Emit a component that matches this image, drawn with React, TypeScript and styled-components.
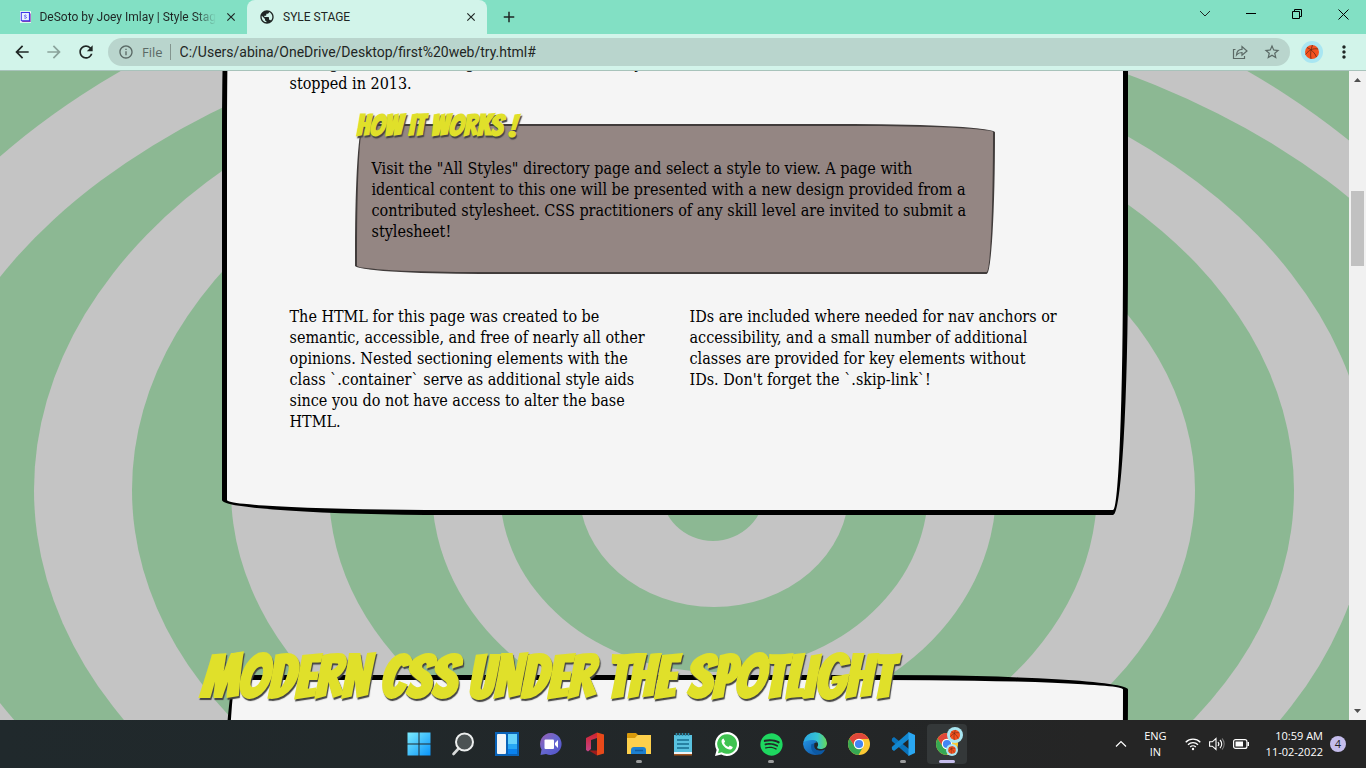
import React from "react";
import styled, { createGlobalStyle } from "styled-components";
import {
  MdAdd,
  MdArrowBack,
  MdArrowForward,
  MdClose,
  MdInfoOutline,
  MdMoreVert,
  MdPublic,
  MdRefresh,
  MdStarBorder,
} from "react-icons/md";
import { FaSpotify } from "react-icons/fa";

const Global = createGlobalStyle`
  * { box-sizing: border-box; }
  body { margin: 0; font-family: "Open Sans", "Noto Sans", sans-serif; }
  button { border: 0; padding: 0; background: none; color: inherit; font: inherit; }
  svg { display: block; }
`;

const Screen = styled.div`
  display: flex;
  flex-direction: column;
  height: 100vh;
  overflow: hidden;
`;

/* ---------- browser frame ---------- */

const TabStrip = styled.header`
  display: flex;
  height: 34px;
  padding-left: 8px;
  background: #82e0c4;
  color: #1f2624;
`;

const Tab = styled.div<{ $active?: boolean }>`
  position: relative;
  display: flex;
  align-items: center;
  gap: 8px;
  width: ${(p) => (p.$active ? 240 : 239)}px;
  padding: 0 9px 0 12px;
  border-radius: 8px 8px 0 0;
  background: ${(p) => (p.$active ? "#d2f4ea" : "transparent")};
  font: 12px Roboto, "Open Sans", sans-serif;
`;

const TabTitle = styled.span<{ $fade?: boolean }>`
  flex: 1;
  white-space: nowrap;
  mask-image: ${(p) => (p.$fade ? "linear-gradient(90deg, #000 88%, transparent)" : "none")};
`;

const TabButton = styled.button`
  display: grid;
  place-items: center;
  width: 14px;
  height: 20px;
`;

const NewTab = styled.button`
  display: grid;
  place-items: center;
  width: 28px;
  margin-left: 8px;
`;

const WindowButtons = styled.div`
  display: flex;
  margin-left: auto;
`;

const WindowButton = styled.button`
  display: grid;
  place-items: center;
  width: 46px;
  height: 28px;
`;

const Toolbar = styled.nav`
  display: flex;
  align-items: center;
  height: 37px;
  padding: 0 6px;
  border-bottom: 1px solid #a8c3bb;
  background: #d2f4ea;
  color: #1f2624;
`;

const ToolButton = styled.button<{ $muted?: boolean }>`
  display: grid;
  place-items: center;
  width: 32px;
  height: 28px;
  color: ${(p) => (p.$muted ? "#8aa39b" : "inherit")};
`;

const AddressBar = styled.label`
  display: flex;
  flex: 1;
  align-items: center;
  height: 28px;
  margin: 0 6px;
  padding: 0 2px 0 10px;
  border-radius: 14px;
  background: #b9d5cd;
  color: #5a6965;
  font-size: 13px;
`;

const Scheme = styled.span`
  margin-left: 8px;
  padding-right: 7px;
  border-right: 1px solid #83958f;
  line-height: 16px;
`;

const AddressInput = styled.input`
  flex: 1;
  min-width: 0;
  padding: 0 9px;
  border: 0;
  outline: 0;
  background: none;
  color: #1f2624;
  font: 14px Roboto, "Open Sans", sans-serif;
`;

/* ---------- page ---------- */

const Pane = styled.div`
  display: grid;
  grid-template-columns: 1fr 17px;
  flex: 1;
  min-height: 0;
`;

const Page = styled.main`
  position: relative;
  overflow: hidden;
  background: #8cb893;
`;

const Rings = styled.svg`
  position: absolute;
  inset: 0;
  width: 100%;
  height: 100%;
`;

const Content = styled.div`
  position: relative;
  max-width: 906px;
  margin: -166px auto 0;
  color: #000;
  font: 300 16px/21px "Roboto Slab", "DejaVu Serif Condensed", "DejaVu Serif", serif;
`;

const Card = styled.section`
  min-height: 260px;
  padding: 142px 61px 78px 63px;
  border: 5px solid #000;
  border-radius: 15px 255px 15px 225px / 225px 15px 255px 15px;
  background: #f5f5f5;
`;

const Paragraph = styled.p`
  margin: 0;
`;

const Note = styled.aside`
  max-width: 640px;
  margin: 30px auto 32px 65px;
  padding: 0 16px 30px 15px;
  border: 2px solid #413c3b;
  border-radius: 15px 255px 15px 225px / 225px 15px 255px 15px;
  background: #948683;
`;

const headingFace = `
  color: #e0e02a;
  font-family: Bangers, "Roboto Condensed", "Liberation Sans Narrow", sans-serif;
  font-weight: 700;
  text-transform: uppercase;
  white-space: nowrap;
  text-shadow: 1px 2px 1px #444;
`;

const NoteTitle = styled.h3`
  ${headingFace}
  margin: -16px 0 16px -15px;
  font-size: 30px;
  line-height: 32px;
`;

const Columns = styled.div`
  display: grid;
  grid-template-columns: 1fr 1fr;
  gap: 28px;
`;

const SectionTitle = styled.h2`
  ${headingFace}
  position: relative;
  margin: 132px 0 -32px -20px;
  font-size: 60px;
  line-height: 60px;
`;

const ScrollTrack = styled.div`
  display: flex;
  flex-direction: column;
  align-items: center;
  padding: 7px 0;
  background: #f1f1f1;
`;

const ScrollThumb = styled.div`
  width: 13px;
  height: 75px;
  margin: 109px 0 auto;
  background: #c1c1c1;
`;

/* ---------- taskbar ---------- */

const Taskbar = styled.footer`
  display: grid;
  grid-template-columns: 1fr auto 1fr;
  height: 48px;
  background: linear-gradient(90deg, #20292c, #222729 50%, #252525 80%);
  color: #fff;
`;

const Apps = styled.div`
  display: flex;
  grid-column: 2;
  align-items: center;
  gap: 4px;
`;

const AppButton = styled.button<{ $active?: boolean }>`
  position: relative;
  display: grid;
  place-items: center;
  width: 40px;
  height: 40px;
  border-radius: 4px;
  background: ${(p) => (p.$active ? "#343839" : "none")};
`;

const Running = styled.span<{ $active?: boolean }>`
  position: absolute;
  bottom: 1px;
  left: 50%;
  width: ${(p) => (p.$active ? 16 : 6)}px;
  height: 3px;
  border-radius: 2px;
  background: ${(p) => (p.$active ? "#c5bdec" : "#9a9c9d")};
  transform: translateX(-50%);
`;

const Tray = styled.div`
  display: flex;
  align-items: center;
  justify-content: flex-end;
  padding-right: 20px;
  font-size: 11px;
  line-height: 16px;
`;

const TrayButton = styled.button`
  display: flex;
  align-items: center;
  gap: 8px;
`;

const Language = styled(TrayButton)`
  display: block;
  margin: 0 18px 0 17px;
  text-align: center;
`;

const Clock = styled.time`
  margin-left: 16px;
  text-align: right;
`;

const Count = styled.span`
  display: grid;
  place-items: center;
  width: 16px;
  height: 16px;
  margin-left: 7px;
  border-radius: 50%;
  background: #c5bdec;
  color: #222;
`;

/* rings from the outermost inwards: centre x, radii */
const rings: [number, number, number][] = [
  [684, 853, 558],
  [714, 794, 487],
  [702, 668, 459],
  [713, 581, 408],
  [713, 482, 344],
  [713, 384, 296],
  [714, 282, 237],
  [714, 214, 182],
  [714, 135, 117],
  [713, 52, 51],
];

const Backdrop = () => (
  <Rings viewBox="0 71 1349 649" preserveAspectRatio="xMidYMid slice" aria-hidden="true">
    {rings.map(([cx, rx, ry], i) => (
      <ellipse key={rx} cx={cx} cy={490} rx={rx} ry={ry} fill={i % 2 ? "#8cb893" : "#c4c4c4"} />
    ))}
  </Rings>
);

const Ball = ({ size }: { size: number }) => (
  <svg width={size} height={size} viewBox="0 0 22 22">
    <circle cx="11" cy="11" r="11" fill="#a9e6f2" />
    <circle cx="11" cy="11" r="7" fill="#f4511e" />
    <path
      d="M6 6.500C10 8 14 12 15.500 16M4.500 13.500C8 9 12 7 17 8M11.500 4C10 8 9 13 10 18"
      fill="none"
      stroke="#6b2a16"
      strokeWidth=".8"
    />
  </svg>
);

const StyleStageIcon = () => (
  <svg width="16" height="16" viewBox="0 0 16 16">
    <path fill="#fff" d="M0 0h16v16H0z" />
    <path fill="#8b3fb5" d="M3 3h12v12H3z" />
    <path fill="#e9f2ff" stroke="#3b35e8" strokeWidth="1.500" d="M1.750 1.750h11.500v11.500H1.750z" />
    <path
      d="M9 5.800C8.300 5 6.200 5.100 6.200 6.400c0 1.500 2.900.8 2.900 2.300 0 1.300-2.300 1.400-3.200.5"
      fill="none"
      stroke="#3b35e8"
      strokeWidth="1.100"
    />
  </svg>
);

const Share = () => (
  <svg width="18" height="18" viewBox="0 0 18 18" fill="none" stroke="#5a6965" strokeWidth="1.200">
    <path d="M4.500 6.500H2.500V15.500h11V13" />
    <path d="M5.500 12c.3-4 2.500-5.600 5.500-5.600V3.500L16 8l-5 4.300V9.500c-2.500 0-4.200.8-5.500 2.500z" />
  </svg>
);

const Chrome = () => (
  <svg width="24" height="24" viewBox="0 0 24 24">
    <circle cx="12" cy="12" r="11" fill="#fbc934" />
    <path fill="#e0473a" d="M2.500 6.500A11 11 0 0 1 21.500 6.500L22 7H12A5 5 0 0 0 7.500 14.300z" />
    <path fill="#36a853" d="M2.500 6.500A11 11 0 0 0 11.500 23L16.300 14.500A5 5 0 0 1 7.700 14.500z" />
    <circle cx="12" cy="12" r="5.200" fill="#fff" />
    <circle cx="12" cy="12" r="4.100" fill="#4285f4" />
  </svg>
);

const Start = () => (
  <svg width="24" height="24" viewBox="0 0 24 24">
    <linearGradient id="start" x2="1" y2="1">
      <stop stopColor="#7cecff" />
      <stop offset="1" stopColor="#0a94f8" />
    </linearGradient>
    <path fill="url(#start)" d="M.5.5h11v11H.5zM12.500.5h11v11h-11zM.5 12.500h11v11H.5zM12.500 12.500h11v11h-11z" />
  </svg>
);

const Search = () => (
  <svg width="24" height="24" viewBox="0 0 24 24">
    <path d="M8.500 15.500L2.500 22" stroke="#d8dada" strokeWidth="2.600" strokeLinecap="round" />
    <circle cx="13.500" cy="10" r="8.500" fill="#4b5253" stroke="#eceeee" strokeWidth="2" />
  </svg>
);

const Widgets = () => (
  <svg width="24" height="24" viewBox="0 0 24 24">
    <path fill="#0a63b8" d="M0 0h24v24H0z" />
    <rect x="2" y="2" width="9" height="20" rx="1" fill="#f3f5f7" />
    <path fill="#66d2fb" d="M13 2h9v10h-9z" />
    <path fill="#27a7f5" d="M13 12h9v5h-9z" />
    <path fill="#0a82ee" d="M13 17h9v5h-9z" />
  </svg>
);

const Chat = () => (
  <svg width="24" height="24" viewBox="0 0 24 24">
    <linearGradient id="chat" x2="1" y2="1">
      <stop stopColor="#9a5fb0" />
      <stop offset=".5" stopColor="#6567d0" />
      <stop offset="1" stopColor="#5050c8" />
    </linearGradient>
    <path fill="url(#chat)" d="M12 1a11 11 0 1 1-5 21l-5.500 1 1-5.500A11 11 0 0 1 12 1z" />
    <rect x="5.500" y="7.500" width="9.500" height="9.500" rx="1" fill="#fff" />
    <path fill="#fff" d="M16 11l3-3v8l-3-3z" />
  </svg>
);

const Office = () => (
  <svg width="24" height="24" viewBox="0 0 24 24">
    <linearGradient id="office" x2="0" y2="1">
      <stop stopColor="#d1232a" />
      <stop offset="1" stopColor="#c4448a" />
    </linearGradient>
    <path fill="url(#office)" d="M3 6l11-5.500V6L8 8v9l-3 2.500-2-1.500z" />
    <path fill="#9d1c1c" d="M6 18.500h8V23.500z" />
    <path fill="#e8491a" d="M14 .5l7 2v19l-7 2z" />
  </svg>
);

const Folder = () => (
  <svg width="24" height="24" viewBox="0 0 24 24">
    <path fill="#d99a0b" d="M0 2a1 1 0 0 1 1-1h8l2 2-2 3H0z" />
    <path fill="#fdd04c" d="M0 6h8l2.500-3H24v19H0z" />
    <path fill="#1d80d0" d="M4 22v-4a3 3 0 0 1 3-3h9a3 3 0 0 1 3 3v4z" />
    <path d="M8 18.500h8" stroke="#115c9f" strokeWidth="1.500" />
  </svg>
);

const Notepad = () => (
  <svg width="24" height="24" viewBox="0 0 24 24">
    <path fill="#59c2e0" d="M3 3h18v19H3z" />
    <path fill="#eef3f5" d="M3 20h18v2H3z" />
    <path fill="#a4561f" d="M3 22h18v1.500H3z" />
    <path d="M6 8h12M6 12h12M6 16h12" stroke="#176d8f" strokeWidth="1.500" />
    <path d="M5.500 1v3M8.500 1v3M11.500 1v3M14.500 1v3M17.500 1v3" stroke="#2f8fae" strokeWidth="1.600" />
  </svg>
);

const WhatsApp = () => (
  <svg width="24" height="24" viewBox="0 0 24 24">
    <path fill="#fff" d="M12 0a12 12 0 1 1-5.700 22.500L0 24l1.600-6.100A12 12 0 0 1 12 0z" />
    <path fill="#3fc351" d="M12 2.200a9.800 9.800 0 1 1-5.200 18L3 21.200l1-3.600A9.800 9.800 0 0 1 12 2.200z" />
    <path
      fill="#fff"
      d="M8.500 6.500c-.5 0-2 .8-2 2.700 0 3.800 5 8.300 8.300 8.300 1.800 0 3-1.200 2.900-2.600l-2.900-1.500-1.400 1.500c-1.900-.7-3.600-2.300-4.300-4l1-1.300z"
    />
  </svg>
);

const Edge = () => (
  <svg width="24" height="24" viewBox="0 0 24 24">
    <linearGradient id="edge-top" x2="1">
      <stop stopColor="#2aa5e4" />
      <stop offset=".6" stopColor="#35c3d2" />
      <stop offset="1" stopColor="#68d957" />
    </linearGradient>
    <linearGradient id="edge-low" x2="1" y2="1">
      <stop stopColor="#2596e6" />
      <stop offset="1" stopColor="#0b4b99" />
    </linearGradient>
    <path fill="url(#edge-low)" d="M0 12C1 5 12 5 14 10.500 9 10 9 17 15 18.500c2.500.6 5 .3 7-1A12 12 0 0 1 0 12z" />
    <path fill="#0c59a4" d="M8.500 12c-2 6 3 11.500 9 10.500 2-1 3.500-2.500 4.500-5-7 3-12 0-10.500-6z" />
    <path fill="url(#edge-top)" d="M.2 10.500A12 12 0 0 1 24 11c0 4.500-3.500 6-6.500 6s-4-1.200-3-2.500c1.500-2 .5-6-4.500-6.500-4-.3-8 1-9.800 2.500z" />
  </svg>
);

const Code = () => (
  <svg width="24" height="24" viewBox="0 0 24 24">
    <path fill="#0a72ba" d="M1 6.500l2-1.500L18 17v7L.8 9z" />
    <path fill="#1287d0" d="M1 17.500l2 1.500L18 7V0L.8 15z" />
    <path fill="#2aa7f2" d="M17.500 0L24 3v18l-6.500 3z" />
  </svg>
);

const ChromeProfile = styled.span`
  position: relative;
`;

const Badge = styled.span<{ $low?: boolean }>`
  position: absolute;
  top: ${(p) => (p.$low ? 12 : -5)}px;
  left: ${(p) => (p.$low ? 11 : 12)}px;
`;

const Caret = ({ down }: { down?: boolean }) => (
  <svg width="7" height="4" viewBox="0 0 7 4">
    <path fill="#505050" d={down ? "M0 0h7L3.500 4z" : "M0 4h7L3.500 0z"} />
  </svg>
);

const apps: { name: string; icon: React.ReactNode; running?: boolean }[] = [
  { name: "Start", icon: <Start /> },
  { name: "Search", icon: <Search /> },
  { name: "Widgets", icon: <Widgets /> },
  { name: "Chat", icon: <Chat /> },
  { name: "Office", icon: <Office /> },
  { name: "File Explorer", icon: <Folder />, running: true },
  { name: "Notepad", icon: <Notepad /> },
  { name: "WhatsApp", icon: <WhatsApp /> },
  { name: "Spotify", icon: <FaSpotify size={23} color="#1ed760" />, running: true },
  { name: "Edge", icon: <Edge /> },
  { name: "Chrome", icon: <Chrome /> },
  { name: "Visual Studio Code", icon: <Code />, running: true },
];

export default function App() {
  return (
    <Screen>
      <Global />
      <TabStrip>
        <Tab>
          <StyleStageIcon />
          <TabTitle $fade>DeSoto by Joey Imlay | Style Stag</TabTitle>
          <TabButton aria-label="Close tab"><MdClose size={14} /></TabButton>
        </Tab>
        <Tab $active>
          <MdPublic size={16} />
          <TabTitle>SYLE STAGE</TabTitle>
          <TabButton aria-label="Close tab"><MdClose size={14} /></TabButton>
        </Tab>
        <NewTab aria-label="New tab"><MdAdd size={18} /></NewTab>
        <WindowButtons>
          <WindowButton aria-label="Search tabs">
            <svg width="12" height="8" fill="none" stroke="#1f2624"><path d="M1 1l5 5 5-5" /></svg>
          </WindowButton>
          <WindowButton aria-label="Minimise">
            <svg width="10" height="2"><path d="M0 0h10v1H0z" /></svg>
          </WindowButton>
          <WindowButton aria-label="Restore">
            <svg width="11" height="11" fill="none" stroke="#000"><path d="M.5 2.500h7v7h-7zM2.500 2.500v-2h7v7h-2" /></svg>
          </WindowButton>
          <WindowButton aria-label="Close">
            <svg width="11" height="11" stroke="#000"><path d="M.5.5l10 10M10.500.5l-10 10" /></svg>
          </WindowButton>
        </WindowButtons>
      </TabStrip>
      <Toolbar>
        <ToolButton aria-label="Back"><MdArrowBack size={20} /></ToolButton>
        <ToolButton $muted aria-label="Forward"><MdArrowForward size={20} /></ToolButton>
        <ToolButton aria-label="Reload"><MdRefresh size={20} /></ToolButton>
        <AddressBar>
          <MdInfoOutline size={16} />
          <Scheme>File</Scheme>
          <AddressInput
            aria-label="Address"
            defaultValue="C:/Users/abina/OneDrive/Desktop/first%20web/try.html#"
          />
          <ToolButton as="span"><Share /></ToolButton>
          <ToolButton as="span"><MdStarBorder size={18} color="#5a6965" /></ToolButton>
        </AddressBar>
        <ToolButton aria-label="Profile"><Ball size={22} /></ToolButton>
        <ToolButton aria-label="Menu"><MdMoreVert size={20} /></ToolButton>
      </Toolbar>

      <Pane>
        <Page>
          <Backdrop />
          <Content>
            <Card>
              <Paragraph>
                through CSS-based design until new community entries
                <br />
                stopped in 2013.
              </Paragraph>
              <Note>
                <NoteTitle>How it works !</NoteTitle>
                <Paragraph>
                  Visit the "All Styles" directory page and select a style to view. A page with
                  identical content to this one will be presented with a new design provided from a
                  contributed stylesheet. CSS practitioners of any skill level are invited to submit a
                  stylesheet!
                </Paragraph>
              </Note>
              <Columns>
                <Paragraph>
                  The HTML for this page was created to be semantic, accessible, and free of nearly
                  all other opinions. Nested sectioning elements with the class `.container` serve
                  as additional style aids since you do not have access to alter the base HTML.
                </Paragraph>
                <Paragraph>
                  IDs are included where needed for nav anchors or accessibility, and a small number
                  of additional classes are provided for key elements without IDs.&nbsp;Don't forget
                  the `.skip-link`!
                </Paragraph>
              </Columns>
            </Card>
            <SectionTitle>Modern CSS under the spotlight</SectionTitle>
            <Card />
          </Content>
        </Page>
        <ScrollTrack>
          <Caret />
          <ScrollThumb />
          <Caret down />
        </ScrollTrack>
      </Pane>

      <Taskbar>
        <Apps>
          {apps.map((app) => (
            <AppButton key={app.name} aria-label={app.name}>
              {app.icon}
              {app.running && <Running />}
            </AppButton>
          ))}
          <AppButton $active aria-label="Chrome, two windows">
            <ChromeProfile>
              <Chrome />
              <Badge><Ball size={16} /></Badge>
              <Badge $low><Ball size={12} /></Badge>
            </ChromeProfile>
            <Running $active />
          </AppButton>
        </Apps>
        <Tray>
          <TrayButton aria-label="Hidden icons">
            <svg width="12" height="8" fill="none" stroke="#fff" strokeWidth="1.200"><path d="M1 6.500l5-5 5 5" /></svg>
          </TrayButton>
          <Language>ENG<br />IN</Language>
          <TrayButton aria-label="Network, volume and battery">
            <svg width="16" height="14" viewBox="0 0 16 14" fill="none" stroke="#fff" strokeWidth="1.300">
              <path d="M.7 5.200a10.300 10.300 0 0 1 14.600 0M3 7.700a7 7 0 0 1 10 0M5.200 10a4 4 0 0 1 5.600 0" />
              <circle cx="8" cy="12" r="1.200" fill="#fff" stroke="none" />
            </svg>
            <svg width="16" height="14" viewBox="0 0 16 14" fill="none" stroke="#fff" strokeWidth="1.100">
              <path d="M.6 4.800h2.700L7 1.500v11L3.300 9.200H.6zM9 5a3 3 0 0 1 0 4M11 3a5.500 5.500 0 0 1 0 8" />
              <path stroke="#777" d="M13 1.500a8 8 0 0 1 0 11" />
            </svg>
            <svg width="17" height="12" viewBox="0 0 17 12">
              <rect x=".6" y="1.600" width="13.300" height="8.800" rx="2" fill="none" stroke="#fff" strokeWidth="1.200" />
              <path fill="#fff" d="M2.500 3.500h7.500v5H2.500zM14.500 4h1.500v4h-1.500z" />
            </svg>
          </TrayButton>
          <Clock>10:59 AM<br />11-02-2022</Clock>
          <Count>4</Count>
        </Tray>
      </Taskbar>
    </Screen>
  );
}
